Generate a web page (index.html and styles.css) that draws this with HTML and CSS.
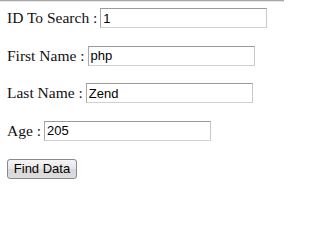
FILE: index.html
```html
<!DOCTYPE html>
<html>
<head>
<meta charset="utf-8">
<link rel="stylesheet" href="styles.css">
</head>
<body>
<div class="topline"></div>
<form class="form">
  <div class="row"><span class="label">ID To Search :</span><input class="field" type="text" value="1"></div>
  <div class="row"><span class="label">First Name :</span><input class="field" type="text" value="php"></div>
  <div class="row"><span class="label">Last Name :</span><input class="field" type="text" value="Zend"></div>
  <div class="row"><span class="label">Age :</span><input class="field" type="text" value="205"></div>
  <div class="row"><button class="btn" type="button">Find Data</button></div>
</form>
</body>
</html>
```
FILE: styles.css
```css
html, body {
  margin: 0;
  padding: 0;
  background: #ffffff;
}
body {
  font-family: "Liberation Serif", "Times New Roman", serif;
  font-size: 15.5px;
  color: #111;
  position: relative;
}
.topline {
  width: 284px;
  height: 1px;
  background: #a8a8a8;
  border-bottom: 1px solid #e4e4e4;
}
.form {
  padding: 6px 0 0 7px;
  display: flex;
  flex-direction: column;
  gap: 17.67px;
}
.row {
  display: flex;
  align-items: center;
  gap: 3px;
  height: 20px;
}
.label {
  white-space: nowrap;
  line-height: 20px;
}
.field {
  box-sizing: border-box;
  width: 167px;
  height: 20px;
  margin: 0;
  padding: 0 2px;
  font-family: "Liberation Sans", Arial, sans-serif;
  font-size: 13px;
  color: #000;
  border: 1px solid #b8b8b8;
  border-top-color: #9a9a9a;
  border-left-color: #a8a8a8;
  border-right-color: #c8c8c8;
  border-bottom-color: #d0d0d0;
  outline: none;
}
.btn {
  box-sizing: border-box;
  width: 70px;
  height: 20px;
  margin: 0;
  padding: 0;
  font-family: "Liberation Sans", Arial, sans-serif;
  font-size: 13px;
  color: #000;
  border: 1px solid #8a8a8a;
  border-radius: 3px;
  background: linear-gradient(#f4f4f4, #e6e6e6 50%, #d8d8d8 51%, #dcdcdc);
}
```
